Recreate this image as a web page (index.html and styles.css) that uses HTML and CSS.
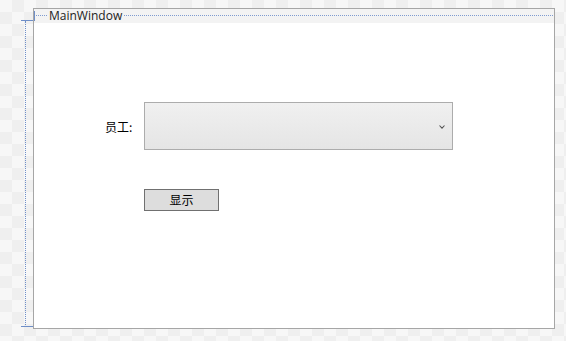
FILE: index.html
```html
<!DOCTYPE html>
<html lang="zh">
<head>
    <meta charset="UTF-8">
    <title>MainWindow</title>
    <link rel="stylesheet" href="styles.css">
</head>
<body>
    <!-- Designer canvas -->
    <div class="canvas">
        <!-- margin guides -->
        <div class="guide-v"></div>
        <div class="guide-tick top"></div>
        <div class="guide-tick bottom"></div>

        <div class="window">
            <div class="title-bar">
                <span class="title-mark"></span>
                <span class="title">MainWindow</span>
            </div>
            <div class="content">
                <div class="row">
                    <label class="label">员工:</label>
                    <div class="combo">
                        <svg class="chevron" width="6" height="4" viewBox="0 0 6 4">
                            <path d="M0.5 0.5 L3 3.2 L5.5 0.5" fill="none" stroke="#555" stroke-width="1.1"/>
                        </svg>
                    </div>
                </div>
                <div class="row buttons">
                    <button class="btn">显示</button>
                </div>
            </div>
        </div>
    </div>
</body>
</html>
```

FILE: styles.css
```css
/* Global */
body {
    margin: 0;
    padding: 0;
    font-family: "Noto Sans CJK SC", "Liberation Sans", sans-serif;
    font-size: 12px;
    color: #000;
}

/* Checkerboard designer surface */
.canvas {
    position: relative;
    width: 566px;
    height: 341px;
    padding: 8px 0 0 33px;
    box-sizing: border-box;
    background-color: #f7f7f7;
    background-image: conic-gradient(#efefef 25%, #f7f7f7 0 50%, #efefef 0 75%, #f7f7f7 0);
    background-size: 24px 24px;
}

/* Margin guides */
.guide-v {
    position: absolute;
    left: 25px;
    top: 21px;
    height: 306px;
    border-left: 1px dotted #6f8fc8;
}
.guide-tick {
    position: absolute;
    left: 21px;
    width: 12px;
    border-top: 1px solid #6f8fc8;
}
.guide-tick.top { top: 20px; }
.guide-tick.bottom { top: 326px; }

/* Window */
.window {
    width: 520px;
    height: 319px;
    border: 1px solid #a6a6a6;
    background: #fff;
    display: flex;
    flex-direction: column;
}
.title-bar {
    position: relative;
    height: 14px;
    background: #f3f3f3;
    display: flex;
    align-items: flex-start;
}
.title-bar::after {
    content: "";
    position: absolute;
    left: 2px;
    right: 1px;
    top: 6px;
    border-top: 1px dotted #7f9bd0;
}
.title-mark {
    width: 1px;
    height: 10px;
    margin-top: 2px;
    background: #6f8fc8;
}
.title {
    position: relative;
    z-index: 1;
    margin-left: 13px;
    padding: 0 1px;
    background: #f3f3f3;
    font-family: "Open Sans", "Liberation Sans", sans-serif;
    font-size: 12px;
    line-height: 13px;
    color: #222;
}

/* Content */
.content {
    padding: 79px 0 0 71px;
}
.row {
    display: flex;
    align-items: center;
}
.label {
    width: 39px;
    font-size: 12px;
}
.combo {
    position: relative;
    width: 307px;
    height: 46px;
    border: 1px solid #acacac;
    background: linear-gradient(#f0f0f0, #e5e5e5);
}
.chevron {
    position: absolute;
    right: 7px;
    top: 22px;
}
.buttons {
    margin-top: 39px;
    padding-left: 39px;
}
.btn {
    width: 75px;
    height: 22px;
    padding: 0;
    border: 1px solid #707070;
    background: #dddddd;
    font-family: "Noto Sans CJK SC", sans-serif;
    font-size: 12px;
    line-height: 18px;
    color: #000;
}
```
